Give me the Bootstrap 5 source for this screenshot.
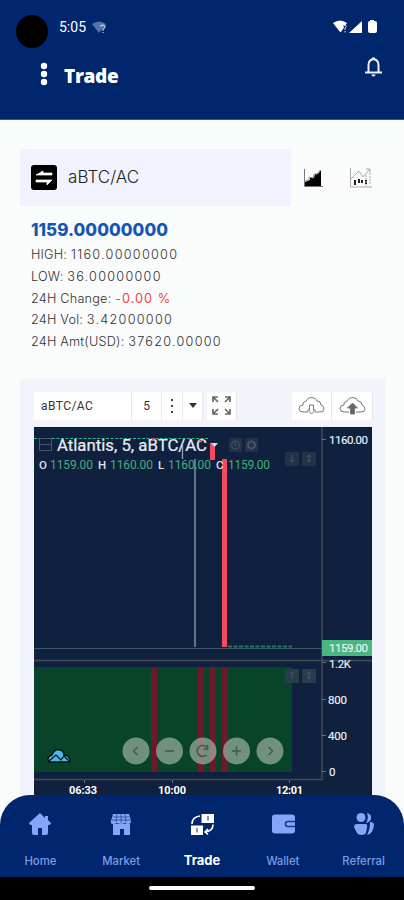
<!DOCTYPE html>
<html lang="en">
<head>
<meta charset="utf-8">
<meta name="viewport" content="width=device-width, initial-scale=1">
<title>Trade</title>
<link href="https://cdn.jsdelivr.net/npm/bootstrap@5.3.0/dist/css/bootstrap.min.css" rel="stylesheet">
<style>
:root{--navy:#00266d;--tint:#f0f3ff}
body{font-family:Inter,Roboto,sans-serif;background:#fafbfb}
svg{display:block;flex:none}
.phone{width:404px;height:900px}
.top-area{background:var(--navy);height:120px;border-bottom:1px solid #46527c}
.status-row{height:52px;padding:2px 26px 0 16px}
.lens{width:32px;height:33px;border-radius:50%;background:#000;margin-top:13px}
.clock{font:400 14px/20px Roboto,sans-serif;margin-left:11px;width:29px}
.title-row{height:48px;padding:0 21px 0 39px}
.page-title{font:800 19px/24px "Open Sans",sans-serif;margin-left:15px;letter-spacing:-.3px}
.pair-row{padding:29px 32px 0 20px}
.pair-box{width:271px;height:57px;background:var(--tint);padding-left:11px;border-radius:4px 0 0 0}
.pair-name{font-size:17px;font-weight:300;color:#222;letter-spacing:.05px;margin-left:11px}
.price{font-size:17px;line-height:22px;font-weight:800;color:#1556b4;letter-spacing:.05px}
.stats{padding:13px 0 0 31px}
.stat{font-size:12.7px;line-height:21.75px;font-weight:300;color:#333;white-space:nowrap;letter-spacing:.2px}
.stat span{letter-spacing:1.25px}
.stat .red{color:#f1433e;font-weight:400;letter-spacing:1px}
.first-stat{margin-top:3px}
.chart-card{margin:26px 19px 0 20px;height:430px;background:#f2f4fc;padding:13px 12px 0 14px}
.tool-row{height:35px}
.tool{background:#fff;height:28px;font:12px/28px Roboto,sans-serif;color:#333;border-right:1px solid #e5e7ed}
.tool-pair{letter-spacing:.45px;padding-left:7px}
.tabs{height:82px;background:var(--navy);border-radius:30px 30px 0 0}
.tab-label{font-size:11.3px;line-height:16px;font-weight:500;color:#7d9de8}
.tab-col{width:81px;padding-top:16px}
.tab-col svg{margin-bottom:16px}
.tab-on{color:#fff;font-weight:700;font-size:13px;line-height:14px}
.dock{z-index:3}
.gesture{height:23px;background:#000;padding-top:9px}
.gesture div{width:106px;height:4px;border-radius:3px;background:#fff}
</style>
</head>
<body>
<div class="phone position-relative overflow-hidden">
<header class="top-area text-white">
  <div class="status-row d-flex align-items-center">
    <div class="lens align-self-start"></div>
    <span class="clock">5:05</span>
    <svg class="ms-1" width="15" height="13" viewBox="0 0 15 13"><path d="M0 3Q7-2 14 3L7 12Z" fill="#5273a8"/><path d="M8 5.500Q11 3 13 5.500Q13 7 11 8v2m0 1v1" fill="none" stroke="#b5c3dc" stroke-width="1.300"/></svg>
    <svg class="ms-auto" width="45" height="14" viewBox="0 0 45 14"><path d="M0 3Q7-2 14 3L8 12H7Z" fill="#fff"/><path d="M10.500 5h4v8h-3z" fill="#00266d"/><path d="M11 5.500q2-1 2.300 1L12 8v2m0 1v1.500" fill="none" stroke="#d6dbe9"/><path d="M16 13L29 1v12z" fill="#fff"/><path d="M37 0h4v1h1q2 0 2 2v8q0 2-2 2h-5q-2 0-2-2V3q0-2 2-2z" fill="#fff"/></svg>
  </div>
  <div class="title-row d-flex align-items-center">
    <svg class="mb-1" width="10" height="26" viewBox="0 0 10 26"><g fill="#fff"><circle cx="5" cy="5" r="3.200"/><circle cx="5" cy="13" r="3.200"/><circle cx="5" cy="21" r="3.200"/></g></svg>
    <h1 class="page-title mb-0">Trade</h1>
    <svg class="ms-auto mb-3" width="19" height="24" viewBox="0 0 19 24"><path d="M4.500 16V9q0-5 5-6q5 1 5 6v7" fill="none" stroke="#f2eff6" stroke-width="2"/><path d="M1 15.500h17v2H1zM7.500 18.500h4q0 2-2 2t-2-2M8 1.500h3V4H8z" fill="#f2eff6"/></svg>
  </div>
</header>
<main>
  <div class="pair-row d-flex align-items-center">
    <div class="pair-box d-flex align-items-center">
      <svg width="26" height="25" viewBox="0 0 26 25"><rect width="26" height="25" rx="3"/><path d="M5 10h16V8H12V6zM5 15h16l-5 5v-3H5z" fill="#fff" stroke="#fff" stroke-width=".7"/></svg>
      <span class="pair-name">aBTC/AC</span>
    </div>
    <svg class="ms-auto me-4" width="22" height="22" viewBox="0 0 22 22"><path d="M2.500 2v17.500H21" fill="none" stroke="#777"/><path d="M3 15l5-2v-3l4 1 1-4h3l3-4v16H3z"/><path d="M3 14l4-1v-3l4 1 1-4h3l3-4" fill="none" stroke="#999"/></svg>
    <svg width="24" height="23" viewBox="0 0 24 23"><path d="M2.500 2v19H24M3 13l8-8 4 6 7-8m-4 0h4v4" fill="none" stroke="#aaa"/><path d="M7 14v5m4-6v4m3-3v3m4-3v4" stroke="#222" stroke-width="2"/><path d="M18 9v11m4-13v11" stroke="#aaa" stroke-dasharray="2 1"/></svg>
  </div>
  <section class="stats">
    <div class="price">1159.00000000</div>
    <div class="stat first-stat">HIGH: <span>1160.00000000</span></div>
    <div class="stat">LOW: <span>36.00000000</span></div>
    <div class="stat">24H Change: <span class="red">-0.00 %</span></div>
    <div class="stat">24H Vol: <span>3.42000000</span></div>
    <div class="stat">24H Amt(USD): <span>37620.00000</span></div>
  </section>
  <section class="chart-card">
    <div class="tool-row d-flex">
      <div class="tool tool-pair" style="width:98px">aBTC/AC</div>
      <div class="tool text-center" style="width:30px">5</div>
      <div class="tool d-flex align-items-center justify-content-center" style="width:21px"><svg width="4" height="16" viewBox="0 0 4 16"><path d="M1 1h2v2H1zm0 6h2v2H1zm0 6h2v2H1z" fill="#444"/></svg></div>
      <div class="tool d-flex align-items-center justify-content-center" style="width:20px"><svg width="8" height="5"><path d="M0 0h8L4 5z" fill="#333"/></svg></div>
      <div class="tool d-flex align-items-center justify-content-center ms-1" style="width:30px"><svg width="19" height="19" viewBox="0 0 19 19" fill="none" stroke="#666" stroke-width="1.700"><path d="M1 6V1h5M1 1l5 5M13 1h5v5m0-5l-5 5M1 13v5h5m-5 0l5-5M18 13v5h-5m5 0l-5-5"/></svg></div>
      <div class="tool d-flex align-items-center justify-content-center ms-auto" style="width:40px"><svg width="27" height="19" viewBox="0 0 27 19" fill="none" stroke="#777"><path d="M10 16H5Q1 16 1 12.500T5 9Q4 6 8 5Q10 1 14 1.500T19 5q4 0 4 4q3 1 3 4t-4 3h-5"/><path d="M11.500 9h4v5h2l-4 4-4-4h2z"/></svg></div>
      <div class="tool d-flex align-items-center justify-content-center" style="width:41px"><svg width="27" height="19" viewBox="0 0 27 19" fill="none" stroke="#777"><path d="M10 16H5Q1 16 1 12.500T5 9Q4 6 8 5Q10 1 14 1.500T19 5q4 0 4 4q3 1 3 4t-4 3h-5"/><path d="M11.500 18h4v-6h3l-5-5-5 5h3z" fill="#666"/></svg></div>
    </div>
    <svg width="339" height="369" viewBox="34 427 339 369" font-family="Roboto,sans-serif">
      <path d="M34 427h338v369H34z" fill="#10213f"/>
      <path d="M34 427.500h338M371.500 427v369" stroke="#071b47"/>
      <path d="M34 438.500h175" stroke="#37b888" stroke-dasharray="3 1.500"/>
      <path d="M34 648.500h290" stroke="#3d5966"/>
      <path d="M34 660.500h338M34 779.500h288V427" fill="none" stroke="#454b57" stroke-width="1.500"/>
      <path d="M34 667h258v105H34z" fill="#07442a"/>
      <path d="M151 667h6v105h-6zM198 667h6v105h-6zM210 667h6v105h-6zM222 667h6v105h-6z" fill="#6e182e"/>
      <path d="M195 459v188M182.500 445v14" stroke="#8f9eb7" stroke-width="1.300"/>
      <path d="M210 443h5v17h-5zM222 459h5v188h-5z" fill="#f34b5e"/>
      <path d="M228 646.500h64" stroke="#22775b" stroke-width="2" stroke-dasharray="4 1.500"/>
      <path d="M39.500 438.500h12v12h-12zM40 444.500h11" fill="none" stroke="#4c5666"/>
      <text x="57" y="451" font-size="16" font-weight="400" fill="#e9edf2" stroke="#e9edf2" stroke-width=".2" textLength="150" lengthAdjust="spacingAndGlyphs">Atlantis, 5, aBTC/AC</text>
      <path d="M211 443h7l-3.500 4z" fill="#dce1e8"/>
      <path d="M151 438h4l-2 3zM199 440h4l-2 3z" fill="#f34b5e"/>
      <g fill="#253149"><path d="M229 438h13v14h-13zM245 438h13v14h-13zM285 452h14v14h-14zM302 452h14v14h-14z"/><path d="M285 669h14v14h-14zM302 669h14v14h-14z" fill="#263d4c"/></g>
      <g fill="none" stroke="#4a5467"><circle cx="235.500" cy="445" r="4"/><path d="M235 442v3h2"/><circle cx="251.500" cy="445" r="3.500" stroke-width="2"/><path d="M292 455v7m-2-2l2 2 2-2M309 455v7m-2-5l2-2 2 2m-4 3l2 2 2-2M292 672v7m-2-5l2-2 2 2M309 672v7m-2-5l2-2 2 2m-4 3l2 2 2-2"/></g>
      <g font-size="11.500" font-weight="500" fill="#dce2ec"><text x="39" y="469">O</text><text x="98" y="469">H</text><text x="158" y="469">L</text><text x="216" y="469">C</text></g>
      <g font-size="12" fill="#45ad7a"><text x="50" y="469" textLength="43">1159.00</text><text x="110" y="469" textLength="43">1160.00</text><text x="168" y="469" textLength="43">1160.00</text><text x="228" y="469" textLength="42">1159.00</text></g>
      <path d="M322 640h50v16h-50z" fill="#4ab782"/>
      <path d="M322 439.500h4M322 662.500h4M322 699.500h4M322 735.500h4M322 771.500h4M84.500 780v3M172.500 780v3M289.500 780v3" stroke="#687180"/>
      <g font-size="11.500" fill="#edf2f5" stroke="#edf2f5" stroke-width=".15"><text x="329" y="444" textLength="39">1160.00</text><text x="329" y="652" textLength="39">1159.00</text><text x="329" y="668" textLength="22">1.2K</text><text x="328" y="704" textLength="19">800</text><text x="328" y="740" textLength="19">400</text><text x="329" y="776">0</text></g>
      <g font-size="11" font-weight="700" fill="#fff"><text x="69" y="794" textLength="28">06:33</text><text x="158" y="794" textLength="28">10:00</text><text x="276" y="794" textLength="27">12:01</text></g>
      <path d="M49 762q-3-5 3-7q3-7 8-5q4 1 4 5q6 0 6 7z" fill="#4ab8ea" stroke="#061512" stroke-width="1.500"/><path d="M49 761l7-6 5 5 3-4 5 5" fill="none" stroke="#061512" stroke-width="1.200"/>
      <g fill="#a3b5aa" fill-opacity=".68"><circle cx="136" cy="751" r="13.500"/><circle cx="169.500" cy="751" r="13.500"/><circle cx="203" cy="751" r="13.500"/><circle cx="236.500" cy="751" r="13.500"/><circle cx="270" cy="751" r="13.500"/></g>
      <g fill="none" stroke="#3d5a4c" stroke-width="1.500"><path d="M137.500 747l-4 4 4 4M165 751h9M206.500 755a5.500 5.500 0 1 1 0-8m1-2v4h-4M232 751h9m-4.500-4.500v9M268.500 747l4 4-4 4"/></g>
    </svg>
  </section>
</main>
<footer class="dock position-absolute bottom-0 start-0 w-100">
  <nav class="tabs d-flex">
    <div class="tab-col d-flex flex-column align-items-center"><svg width="24" height="26" viewBox="0 0 24 26"><path d="M12 2L1 12q0 2 3 2v8q0 2 2 2h4v-7h4v7h4q2 0 2-2v-8q3 0 3-2l-3-3V5h-3v2z" fill="#83a7f8"/></svg><span class="tab-label">Home</span></div>
    <div class="tab-col d-flex flex-column align-items-center"><svg width="24" height="26" viewBox="0 0 24 26"><path d="M4 3h16l2 7q0 3-3 3q-2 0-3-1q-2 1-4 1t-4-1q-2 1-4 1q-3 0-2-3zM4 13h17v11h-6v-6h-4v6H4z" fill="#83a7f8"/><path d="M3 9h19M8 3l-1 8m5-8v9m4-9l1 8M4 6h16" stroke="#23488f" stroke-width=".8"/></svg><span class="tab-label">Market</span></div>
    <div class="tab-col d-flex flex-column align-items-center"><svg width="26" height="26" viewBox="0 0 26 26"><path d="M2 14.500h12V24H2zM12.500 3H25v9H12.500z" fill="#fff"/><path d="M3 13q0-7 8-8M24 13.500q0 7-8 7.500m3-3l-3 3 3 2.500" fill="none" stroke="#fff" stroke-width="1.600"/><path d="M8 17v4.500M19 5v4.500" stroke="#8a91aa" stroke-width="2"/></svg><span class="tab-label tab-on">Trade</span></div>
    <div class="tab-col d-flex flex-column align-items-center"><svg width="26" height="26" viewBox="0 0 26 26"><rect x="2" y="3.500" width="23" height="19" rx="3" fill="#83a7f8"/><path d="M25 10.500h-7q-2.500 0-2.500 2.500t2.500 2.500h7" fill="none" stroke="#173b88" stroke-width="1.500"/></svg><span class="tab-label">Wallet</span></div>
    <div class="tab-col d-flex flex-column align-items-center"><svg width="24" height="26" viewBox="0 0 24 26" fill="#83a7f8"><circle cx="9" cy="6.500" r="4.500"/><path d="M2 16q0-3 3-3h8q3 0 2 3l-1 6q-1 2-4.500 2T5 22zM15 2q5 1 4 6q-1 3-5 4q3-5 1-10zM18 11q4 0 4 3q-1 9-7 10q3-5 3-13z"/></svg><span class="tab-label">Referral</span></div>
  </nav>
  <div class="gesture d-flex justify-content-center"><div></div></div>
</footer>
</div>
<script src="https://cdn.jsdelivr.net/npm/bootstrap@5.3.0/dist/js/bootstrap.bundle.min.js"></script>
</body>
</html>
